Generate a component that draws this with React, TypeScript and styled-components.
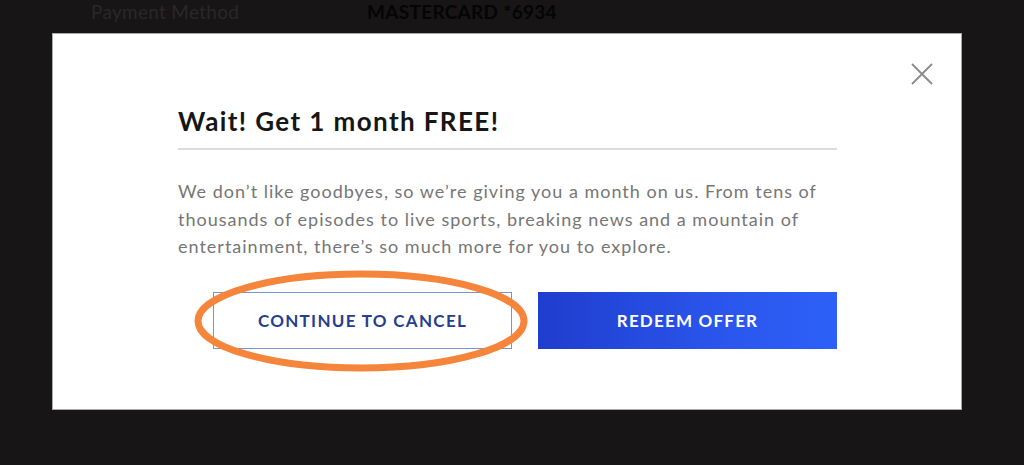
import React from "react";
import styled, { createGlobalStyle } from "styled-components";

const Global = createGlobalStyle`
  html, body { margin: 0; padding: 0; }
  body {
    background: #171516;
    width: 1024px;
    height: 465px;
    overflow: hidden;
    font-family: Lato, "Open Sans", Arial, sans-serif;
  }
`;

const Page = styled.div`
  display: flex;
  flex-direction: column;
  height: 465px;
`;

const BackRow = styled.div`
  display: flex;
  height: 24px;
  margin-bottom: 9px;
  padding-left: 91px;
  font-size: 19px;
  line-height: 24px;
  color: #242223;
`;

const BackLabel = styled.span<{ $w?: number; $bold?: boolean }>`
  width: ${(p) => (p.$w ? `${p.$w}px` : "auto")};
  font-weight: ${(p) => (p.$bold ? 700 : 400)};
  color: ${(p) => (p.$bold ? "#050505" : "#2a2829")};
  letter-spacing: 0.3px;
`;

const Modal = styled.div`
  position: relative;
  margin-left: 52px;
  width: 910px;
  height: 377px;
  box-sizing: border-box;
  background: #fff;
  border: 1.5px solid #a9a9a9;
  padding: 70px 0 0 125px;
`;

const Close = styled.button`
  position: absolute;
  top: 27px;
  right: 26px;
  width: 26px;
  height: 26px;
  padding: 0;
  border: none;
  background: none;
  display: flex;
  align-items: center;
  justify-content: center;
`;

const Content = styled.div`
  width: 659px;
  display: flex;
  flex-direction: column;
`;

const Title = styled.h2`
  margin: 0;
  font-size: 26px;
  line-height: 34px;
  font-weight: 700;
  letter-spacing: 1.4px;
  color: #161616;
  padding-bottom: 10px;
  border-bottom: 2px solid #dcdcdc;
`;

const Body = styled.p`
  margin: 28px 0 0;
  font-size: 18px;
  line-height: 27.5px;
  color: #767676;
  letter-spacing: 1px;
`;

const Buttons = styled.div`
  display: flex;
  gap: 26px;
  margin-top: 31px;
  padding-left: 35px;
`;

const Button = styled.button<{ $primary?: boolean }>`
  position: relative;
  width: 299px;
  height: 57px;
  box-sizing: border-box;
  font-family: Lato, "Open Sans", Arial, sans-serif;
  font-size: 17px;
  font-weight: 700;
  letter-spacing: ${(p) => (p.$primary ? "1.2px" : "1.3px")};
  border: ${(p) => (p.$primary ? "none" : "1.5px solid #7b93d4")};
  background: ${(p) =>
    p.$primary ? "linear-gradient(90deg, #1f3dce 0%, #2a55ec 60%, #2d60f8 100%)" : "#fff"};
  color: ${(p) => (p.$primary ? "#fff" : "#273d8f")};
  cursor: pointer;
`;

const Circle = styled.svg`
  position: absolute;
  left: -20px;
  top: -22px;
  width: 340px;
  height: 102px;
  overflow: visible;
  pointer-events: none;
`;

export default function App() {
  return (
    <>
      <Global />
      <Page>
        <BackRow>
          <BackLabel $w={276}>Payment Method</BackLabel>
          <BackLabel $bold>MASTERCARD *6934</BackLabel>
        </BackRow>
        <Modal>
          <Close aria-label="Close">
            <svg width="22" height="22" viewBox="0 0 22 22">
              <path d="M1 1 L21 21 M21 1 L1 21" stroke="#8a8a8a" strokeWidth="1.8" />
            </svg>
          </Close>
          <Content>
            <Title>Wait! Get 1 month FREE!</Title>
            <Body>
              We don’t like goodbyes, so we’re giving you a month on us. From tens of
              thousands of episodes to live sports, breaking news and a mountain of
              entertainment, there’s so much more for you to explore.
            </Body>
            <Buttons>
              <Button>
                CONTINUE TO CANCEL
                <Circle viewBox="0 0 340 102">
                  <ellipse
                    cx="167"
                    cy="50"
                    rx="163"
                    ry="47"
                    fill="none"
                    stroke="#f5853b"
                    strokeWidth="7"
                  />
                </Circle>
              </Button>
              <Button $primary>REDEEM OFFER</Button>
            </Buttons>
          </Content>
        </Modal>
      </Page>
    </>
  );
}
